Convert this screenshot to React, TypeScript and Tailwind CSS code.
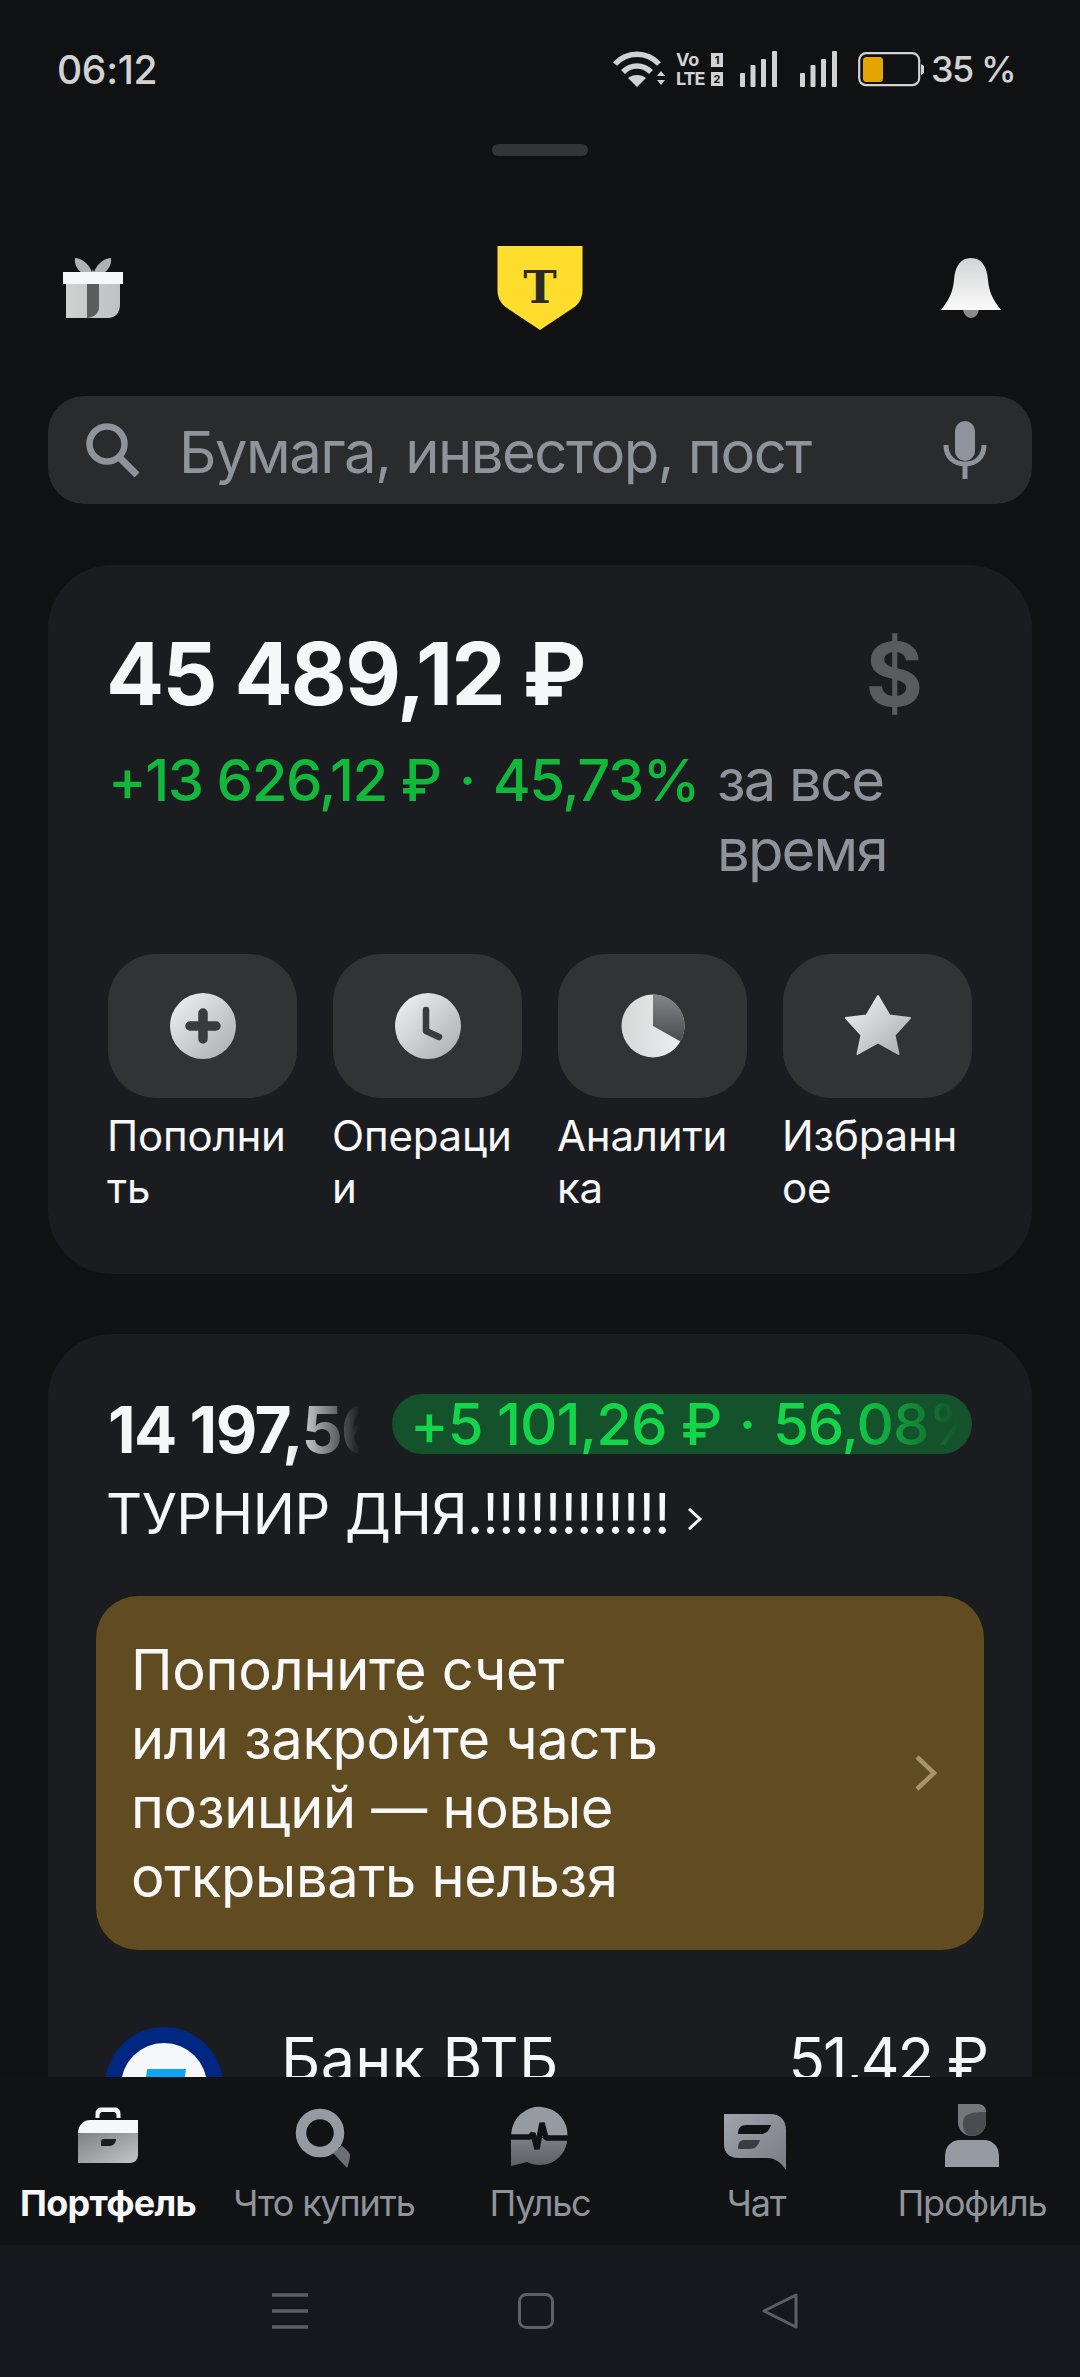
import React from "react";

const font = { fontFamily: "Inter, 'Noto Sans', sans-serif" };

function Defs() {
  return (
    <svg width="0" height="0" className="absolute">
      <defs>
        <linearGradient id="lightDiag" x1="0" y1="0" x2="1" y2="1">
          <stop offset="0" stopColor="#f2f3f4" />
          <stop offset="1" stopColor="#a9abad" />
        </linearGradient>
        <linearGradient id="pieDark" x1="0" y1="0" x2="0" y2="1">
          <stop offset="0" stopColor="#85868a" />
          <stop offset="1" stopColor="#4a4b4d" />
        </linearGradient>
        <linearGradient id="pieLight" x1="0" y1="0" x2="1" y2="0">
          <stop offset="0" stopColor="#d6d8d8" />
          <stop offset="1" stopColor="#eeeff0" />
        </linearGradient>
        <linearGradient id="caseLow" x1="0" y1="0" x2="1" y2="1">
          <stop offset="0" stopColor="#7f8082" />
          <stop offset="1" stopColor="#c4c5c6" />
        </linearGradient>
        <linearGradient id="bellGrad" x1="0" y1="0" x2="0" y2="1">
          <stop offset="0" stopColor="#d3d4d5" />
          <stop offset="1" stopColor="#fafafa" />
        </linearGradient>
        <linearGradient id="giftBox" x1="0" y1="0" x2="1" y2="0">
          <stop offset="0" stopColor="#cfd1d1" />
          <stop offset="1" stopColor="#bfc1c2" />
        </linearGradient>
        <linearGradient id="chatGrad" x1="0" y1="0" x2="1" y2="1">
          <stop offset="0" stopColor="#a0a4ac" />
          <stop offset="1" stopColor="#787b82" />
        </linearGradient>
        <linearGradient id="pulseLow" x1="0" y1="0" x2="0" y2="1">
          <stop offset="0" stopColor="#7d7f86" />
          <stop offset="1" stopColor="#5d5f64" />
        </linearGradient>
      </defs>
    </svg>
  );
}

function StatusBar() {
  return (
    <div className="h-[138px] flex items-center justify-between pl-[57px] pr-[65px] text-[#d2d2d2]">
      <span className="text-[39px] font-medium leading-none tracking-[-0.3px]">06:12</span>
      <div className="flex items-center">
        <svg width="54" height="38" viewBox="0 0 54 38" fill="none" stroke="#d2d2d2" strokeWidth="5.5">
          <path d="M3 14 C15 1 35 1 47 14" />
          <path d="M11 22 C19 14 31 14 39 22" />
          <path d="M25 37 L16 28 C21 24 29 24 34 28 Z" fill="#d2d2d2" stroke="none" />
          <path d="M45 26 L49 21 L53 26 Z M45 30 L53 30 L49 35 Z" fill="#d2d2d2" stroke="none" />
        </svg>
        <div className="ml-[10px] w-[47px] h-[36px] flex flex-col justify-between text-[18px] leading-[17px] font-bold">
          <div className="flex justify-between items-center">
            <span>Vo</span>
            <span className="w-[12px] h-[14px] bg-[#d2d2d2] text-[#111213] text-[11px] leading-[14px] text-center">1</span>
          </div>
          <div className="flex justify-between items-center">
            <span className="tracking-[-1px]">LTE</span>
            <span className="w-[12px] h-[14px] bg-[#d2d2d2] text-[#111213] text-[11px] leading-[14px] text-center">2</span>
          </div>
        </div>
        <Signal className="ml-[17px]" />
        <Signal className="ml-[23px]" />
        <svg className="ml-[21px]" width="68" height="35" viewBox="0 0 68 35">
          <rect x="1.2" y="1.2" width="60" height="32" rx="7" fill="none" stroke="#d2d2d2" strokeWidth="2.2" />
          <rect x="5" y="5" width="20" height="25" rx="3.5" fill="#e5a505" />
          <path d="M63 12 L66 14 V21 L63 23 Z" fill="#d2d2d2" />
        </svg>
        <span className="ml-[5px] w-[84px] whitespace-nowrap text-[36px] font-medium leading-none tracking-[-1.5px]">35 %</span>
      </div>
    </div>
  );
}

function Signal({ className }: { className: string }) {
  return (
    <svg className={className} width="37" height="36" viewBox="0 0 37 36" fill="#d2d2d2">
      <rect x="0" y="22" width="5" height="14" rx="1" />
      <rect x="10.5" y="14" width="5" height="22" rx="1" />
      <rect x="21" y="8" width="5" height="28" rx="1" />
      <rect x="32" y="0" width="5" height="36" rx="1" />
    </svg>
  );
}

function Header() {
  return (
    <div className="mt-[90px] h-[84px] px-[62px] grid grid-cols-3 items-center">
      <svg width="62" height="62" viewBox="0 0 62 62">
        <path d="M13 1 C18 1 26 5 30 15 L31 12 L32 15 C36 5 44 1 49 1 C50 8 46 13 42 16 H20 C16 13 12 8 13 1 Z" fill="#b0b1b2" />
        <path d="M4 27 H58 V47 C58 56 53 61 46 61 H4 Z" fill="url(#giftBox)" />
        <path d="M25 27 H37 V50 C37 56 33 60 25 61 Z" fill="#5b5c5d" />
        <rect x="1" y="15" width="60" height="12" fill="#f6f7f8" />
      </svg>
      <svg width="86" height="84" viewBox="0 0 86 84" className="justify-self-center">
        <path d="M0.5 0 H85.5 V44 C85.5 52 82 58 76 62 L43 84 L10 62 C4 58 0.5 52 0.5 44 Z" fill="#ffdd2d" />
        <text x="43" y="57" textAnchor="middle" fontFamily="'DejaVu Serif', serif" fontWeight="700" fontSize="45" fill="#2b2a26">T</text>
      </svg>
      <svg width="60" height="60" viewBox="0 0 60 60" className="justify-self-end mr-[17px]">
        <path d="M22 50 H38 C38 56 34 60 30 60 C26 60 22 56 22 50 Z" fill="#8a8b8d" />
        <path d="M30 0 C41 0 46 9 47 22 C48 34 52 42 60 52 H0 C8 42 12 34 13 22 C14 9 19 0 30 0 Z" fill="url(#bellGrad)" />
      </svg>
    </div>
  );
}

function SearchBar() {
  return (
    <div className="mt-[66px] mx-[48px] h-[108px] rounded-[36px] bg-[#2a2b2d] flex items-center pl-[38px] pr-[45px]">
      <svg width="54" height="54" viewBox="0 0 54 54" fill="none" stroke="#8f939c" strokeWidth="6.5">
        <circle cx="21" cy="21" r="17.5" />
        <path d="M33 34 L51 52" strokeWidth="7" />
      </svg>
      <span className="ml-[39px] mt-[4px] text-[#8f939c] text-[58px] leading-none flex-1 tracking-[-1.5px]">Бумага, инвестор, пост</span>
      <svg width="44" height="58" viewBox="0 0 44 58" fill="none">
        <rect x="12" y="0" width="20" height="40" rx="10" fill="#8f939c" />
        <path d="M3 24 C3 36 11 43 22 43 C33 43 41 36 41 24 M22 43 V58" stroke="#8f939c" strokeWidth="5" />
      </svg>
    </div>
  );
}

function PlusIcon() {
  return (
    <svg width="72" height="72" viewBox="0 0 72 72">
      <circle cx="36" cy="36" r="33" fill="url(#lightDiag)" />
      <path d="M36 23 V49 M23 36 H49" stroke="#3a3b3d" strokeWidth="9.5" strokeLinecap="round" />
    </svg>
  );
}
function ClockIcon() {
  return (
    <svg width="72" height="72" viewBox="0 0 72 72">
      <circle cx="36" cy="36" r="33" fill="url(#lightDiag)" />
      <path d="M34 20 V41 L47 47" fill="none" stroke="#3a3b3d" strokeWidth="6.5" strokeLinejoin="round" strokeLinecap="round" />
    </svg>
  );
}
function PieIcon() {
  return (
    <svg width="72" height="72" viewBox="0 0 72 72">
      <circle cx="36" cy="36" r="31.5" fill="url(#pieLight)" />
      <path d="M36 4.5 A31.5 31.5 0 0 1 63.5 51.5 L36 36 Z" fill="url(#pieDark)" />
    </svg>
  );
}
function StarIcon() {
  return (
    <svg width="72" height="72" viewBox="0 0 72 72">
      <path d="M36 6 L47.5 25.5 L68 28 L52.5 45 L56.5 64 L36 52.5 L15.5 64 L19.5 45 L4 28 L24.5 25.5 Z" fill="url(#lightDiag)" stroke="url(#lightDiag)" strokeWidth="2" strokeLinejoin="round" />
    </svg>
  );
}

const actions = [
  { label: "Пополни\nть", icon: <PlusIcon /> },
  { label: "Операци\nи", icon: <ClockIcon /> },
  { label: "Аналити\nка", icon: <PieIcon /> },
  { label: "Избранн\nое", icon: <StarIcon /> },
];

function SummaryCard() {
  return (
    <div className="mt-[61px] mx-[48px] h-[709px] rounded-[64px] bg-[#1b1c1f] px-[60px] pt-[65px]">
      <div className="flex items-center justify-between pr-[49px] h-[88px]">
        <span className="-ml-[2px] text-[86px] leading-none font-bold text-[#f6f7f8] tracking-[-1.7px]">45 489,12 ₽</span>
        <span className="text-[88px] leading-none font-bold text-[#5a5b5e]">$</span>
      </div>
      <div className="mt-[27px] flex items-start">
        <span className="text-[58px] leading-[70px] text-[#12b83c] font-medium whitespace-nowrap tracking-[-1.5px]">
          +13 626,12 ₽<span className="mx-[4px]"> · </span>45,73%
        </span>
        <span className="ml-[18px] w-[200px] text-[58px] leading-[70px] text-[#8f939c] tracking-[-1.8px]">за все время</span>
      </div>
      <div className="mt-[69px] flex gap-[36px]">
        {actions.map((a) => (
          <div key={a.label} className="w-[189px]">
            <div className="h-[144px] rounded-[48px] bg-[#323335] flex items-center justify-center">{a.icon}</div>
            <div className="mt-[12px] -ml-[1px] text-[42px] leading-[52px] text-[#f6f7f8] whitespace-pre-line tracking-[-0.2px]">{a.label}</div>
          </div>
        ))}
      </div>
    </div>
  );
}

function PositionsCard() {
  return (
    <div className="mt-[60px] mx-[48px] rounded-t-[64px] bg-[#1b1c1f] px-[60px] pt-[60px] pb-[100px]">
      <div className="flex items-center gap-[32px] h-[60px]">
        <div className="w-[252px] shrink-0 overflow-hidden whitespace-nowrap text-[64px] leading-[72px] mt-[12px] font-bold text-[#f6f7f8] tracking-[-1.5px] [mask-image:linear-gradient(to_right,#000_72%,transparent_100%)]">14 197,56 ₽</div>
        <div className="flex-1 h-[60px] rounded-[30px] bg-[#13522a] pl-[18px] overflow-hidden">
          <div className="overflow-hidden whitespace-nowrap text-[58px] leading-[60px] text-[#14d44a] font-medium tracking-[-1px] [mask-image:linear-gradient(to_right,#000_78%,transparent_98%)]">
            +5 101,26 ₽<span className="mx-[3px]"> · </span>56,08%
          </div>
        </div>
      </div>
      <div className="mt-[25px] -ml-[2px] flex items-center h-[70px]">
        <span className="text-[56px] leading-[70px] text-[#f6f7f8] whitespace-nowrap tracking-[-0.5px]">ТУРНИР ДНЯ.!!!!!!!!!!!!</span>
        <svg className="ml-[17px] mt-[10px]" width="16" height="22" viewBox="0 0 16 22" fill="none" stroke="#f6f7f8" strokeWidth="3">
          <path d="M2 1 L13 11 L2 21" />
        </svg>
      </div>
      <div className="mt-[47px] -mx-[12px] h-[354px] rounded-[42px] bg-[#604c20] pl-[35px] pr-[47px] flex items-center justify-between">
        <div className="mt-[2px] text-[56px] leading-[69px] text-[#f8f8f8] whitespace-pre-line tracking-[-0.3px]">{"Пополните счет\nили закройте часть\nпозиций — новые\nоткрывать нельзя"}</div>
        <svg width="22" height="36" viewBox="0 0 22 36" fill="none" stroke="#a4946f" strokeWidth="4.5">
          <path d="M2 2 L19 18 L2 34" />
        </svg>
      </div>
      <div className="mt-[77px] -ml-[3px] flex items-start">
        <div className="w-[118px] h-[118px] rounded-full bg-[#002882] flex items-start justify-center pt-[16px] shrink-0">
          <div className="w-[86px] h-[86px] rounded-full bg-[#f6f7f8] flex justify-center pt-[26px]">
            <div className="w-[44px] h-[34px] bg-[#0ea5f5] [clip-path:polygon(12%_0,100%_0,88%_100%,0_100%)]" />
          </div>
        </div>
        <div className="ml-[58px] -mt-[3px] text-[61px] leading-[70px] text-[#f6f7f8] tracking-[0.3px]">Банк ВТБ</div>
        <div className="ml-auto -mt-[3px] text-[60px] leading-[70px] text-[#f6f7f8] tracking-[-2px] -mr-[15px]">51,42 ₽</div>
      </div>
    </div>
  );
}

function TabIcon({ i }: { i: number }) {
  const gray = "#969aa3";
  if (i === 0)
    return (
      <svg width="72" height="72" viewBox="0 0 72 72">
        <path d="M23.5 18 V14 C23.5 10 26 7.5 29 7.5 H43 C46 7.5 48.5 10 48.5 14 V18 H44.5 V15 C44.5 13.5 43.5 12 42 12 H30 C28.5 12 27.5 13.5 27.5 15 V18 Z" fill="#f6f7f8" />
        <path d="M6 33 C6 26 11 20 18 20 H66 V33 Z" fill="#f6f7f8" />
        <path d="M6 33 H66 V55 C66 60 62 63 58 63 H6 Z" fill="url(#caseLow)" />
        <path d="M31 39 H44 C44 43 41 46 38 46 H29 C29 42 29 39 31 39 Z" fill="#1b1c1e" />
      </svg>
    );
  if (i === 1)
    return (
      <svg width="72" height="72" viewBox="0 0 72 72">
        <path d="M45 53 L54 46 C59 50 62 53 62 55 C62 60 60 65 59 68 Z" fill="#6c6e75" />
        <circle cx="32" cy="33" r="19" fill="none" stroke={gray} strokeWidth="10.5" />
      </svg>
    );
  if (i === 2)
    return (
      <svg width="72" height="72" viewBox="0 0 72 72">
        <path d="M7.3 33 A28 28 0 0 1 63.5 37 L40 37 L7.3 37 Z" fill={gray} />
        <path d="M7 38 H63.4 C63 53 51 65 36 65 C31 65 27 64 23 62 L7 66 Z" fill="url(#pulseLow)" />
        <path d="M7 37 H26 L29 33.5 L33 49 L38 23 L42 38 H64" fill="none" stroke="#111213" strokeWidth="5.5" strokeLinejoin="bevel" />
      </svg>
    );
  if (i === 3)
    return (
      <svg width="72" height="72" viewBox="0 0 72 72">
        <path d="M4 14 H50 C60 14 66 20 66 30 V70 C60 61 54 58 47 58 H18 C10 58 4 53 4 45 Z" fill="url(#chatGrad)" />
        <path d="M26 25 H51 C49 31 46 34 40 34 H18 C18 28 21 25 26 25 Z" fill="#111213" />
        <path d="M24 40 H40 C38 46 35 49 30 49 H18 C18 43 20 40 24 40 Z" fill="#3b3d43" />
      </svg>
    );
  return (
    <svg width="72" height="72" viewBox="0 0 72 72">
      <path d="M22 4 H42 C47 4 50 7 50 12 V22 C50 30 44 36 36 36 C28 36 22 30 22 22 Z" fill="#75777d" />
      <path d="M27 24 C27 14 33 12 50 12 V22 C50 30 44 36 36 36 C31 36 27 32 27 24 Z" fill="#4b4c50" />
      <path d="M9 67 V56 C9 46 16 40 24 40 H48 C56 40 63 46 63 56 V67 Z" fill={gray} />
    </svg>
  );
}

function TabBar() {
  const tabs = ["Портфель", "Что купить", "Пульс", "Чат", "Профиль"];
  return (
    <div className="h-[168px] bg-[#111213] grid grid-cols-5 pt-[23px] shrink-0">
      {tabs.map((t, i) => (
        <div key={t} className="flex flex-col items-center">
          <TabIcon i={i} />
          <span className={i === 0 ? "mt-[9px] text-[36px] leading-[44px] whitespace-nowrap tracking-[-0.75px] font-bold text-[#f6f7f8]" : "mt-[9px] text-[36px] leading-[44px] whitespace-nowrap tracking-[-1.2px] text-[#8f939c]"}>{t}</span>
        </div>
      ))}
    </div>
  );
}

function NavBar() {
  return (
    <div className="h-[132px] bg-[#15181c] flex items-center pl-[272px] shrink-0">
      <svg width="36" height="36" viewBox="0 0 36 36" fill="none" stroke="#5d5f63" strokeWidth="3.5">
        <path d="M0 2 H36 M0 18 H36 M0 34 H36" />
      </svg>
      <svg className="ml-[210px]" width="36" height="36" viewBox="0 0 36 36" fill="none" stroke="#5d5f63" strokeWidth="3">
        <rect x="1.5" y="1.5" width="33" height="33" rx="7" />
      </svg>
      <svg className="ml-[208px]" width="36" height="36" viewBox="0 0 36 36" fill="none" stroke="#5d5f63" strokeWidth="3" strokeLinejoin="round">
        <path d="M34 2 V34 L2 18 Z" />
      </svg>
    </div>
  );
}

export default function App() {
  return (
    <div className="w-[1080px] h-[2377px] bg-[#101112] flex flex-col overflow-hidden" style={font}>
      <Defs />
      <div className="flex-1 overflow-hidden min-h-0">
        <StatusBar />
        <div className="mt-[6px] mx-auto w-[96px] h-[12px] rounded-full bg-[#333436]" />
        <Header />
        <SearchBar />
        <SummaryCard />
        <PositionsCard />
      </div>
      <TabBar />
      <NavBar />
    </div>
  );
}
